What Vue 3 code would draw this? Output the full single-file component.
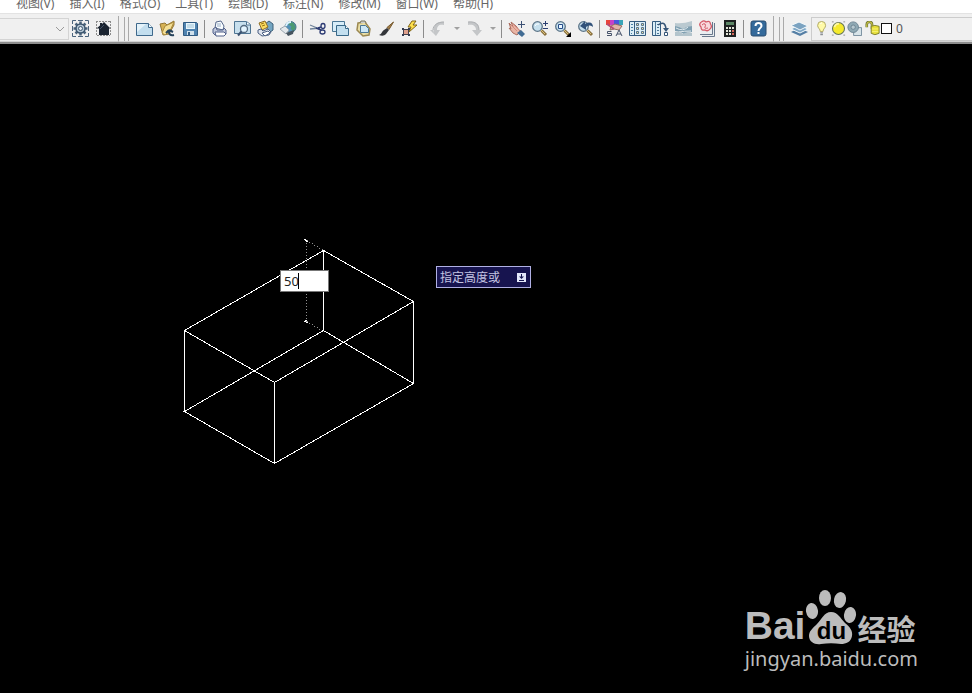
<script setup>
import { ref } from 'vue'

const menus = ['视图(V)', '插入(I)', '格式(O)', '工具(T)', '绘图(D)', '标注(N)', '修改(M)', '窗口(W)', '帮助(H)']
const workspace = ref('')
const height = ref('50')

const glass = '<circle cx="6.500" cy="6.500" r="4.800" fill="#c6e0ee" stroke="#5d7588" stroke-width="1.300"/><path d="M4 6q1-3 4-2" stroke="#fff" fill="none"/><path d="M10.500 10.500l4.500 4.500" stroke="#8a713f" stroke-width="3"/><path d="M10 10l4 4" stroke="#dcc37c"/>'

const icons = {
  gear: '<path d="M.5 4V.5H4M13 .5h3.500V4M16.500 13v3.500H13M4 16.500H.5V13M6 .5h5M6 16.500h5M.5 6v5M16.500 6v5" fill="none" stroke="#4b647c"/><path d="M8.500 1.500v14M1.500 8.500h14M3.500 3.500l10 10M13.500 3.500l-10 10" stroke="#4b647c" stroke-width="2.500"/><circle cx="8.500" cy="8.500" r="4.500" fill="#b6c8d6" stroke="#3d566e" stroke-width="1.500"/><circle cx="8.500" cy="8.500" r="2" fill="#e6eef3" stroke="#3d566e"/>',
  home: '<path d="M1 1.500h15M1.500 1v15M15.500 1v15M2 15.500h13" stroke="#8b8b8b" stroke-dasharray="2 1"/><path d="M1.500 8.500L5 5.500V3h2v1l2-2 6.500 6.500H14V15H4V8.500z" fill="#1b2431"/><path d="M5 9l4-4" stroke="#435267"/>',
  fresh: '<path d="M.5 3.500h12l4 4v8H.5z" fill="#c3deee" stroke="#3f698c"/><path d="M12.500 3.500v4h4" fill="#f4fafc" stroke="#3f698c"/><path d="M1 4h9L1 12z" fill="#e5f3fa"/>',
  open: '<path d="M1 4l5-1 2 2 7-4v4l-5 9-6 1z" fill="#d6b154" stroke="#937635"/><path d="M3 13l3-7 9-4-4 9-5 4z" fill="#f5df94" stroke="#a98b3e"/><path d="M15 15c-4 1-5-1-5-4m0-1l-3 3m3-3l4 2" fill="none" stroke="#24425b" stroke-width="2"/>',
  save: '<path d="M1.500 2.500h13l1 1v12h-14z" fill="#4f83b0" stroke="#315b82"/><path d="M4 3h9v6H4z" fill="#e8f5fb"/><path d="M5 5h7M5 7h7" stroke="#a0c4d8"/><path d="M5 11h7v4H5z" fill="#d0e1ec"/><path d="M6 12h2v3H6z" fill="#315b82"/>',
  print: '<path d="M4 8l1-6 5-1 3 5-1 4z" fill="#f8fcff" stroke="#56688a"/><path d="M2 9l3-2 1 3h6l1-2 2 2v4l-3 1H4l-2-2z" fill="#c1c9dc" stroke="#51618a"/><path d="M4 12h9l2 2-2 2H5z" fill="#fff" stroke="#51618a"/><path d="M6 4h4M6 6h4" stroke="#99aec5"/>',
  preview: '<path d="M.5 1.500h12l4 3v9H.5z" fill="#c7dfed" stroke="#4f7593"/><path d="M12.500 2v3h4" fill="#fff" stroke="#4f7593"/><circle cx="10" cy="9" r="3.500" fill="#e4f5ff" stroke="#536a80" stroke-width="1.300"/><path d="M7.500 11.500L4 15.500" stroke="#3a5170" stroke-width="2"/>',
  publish: '<path d="M8 4l4-3 4 3v6l-4 3z" fill="#74a5c1" stroke="#3f6079"/><path d="M2 3l6-2 3 6-6 3z" fill="#fbdc60" stroke="#8c6b25"/><path d="M4 4l3-1M5 6l3-1" stroke="#9b7314"/><path d="M1 10l3-1 2 2 5-2 3 3-2 3-7 1-4-3z" fill="#dfe4ed" stroke="#4a5f82"/><path d="M5 13l6-2 2 2-5 3z" fill="#fff" stroke="#4a5f82"/>',
  globe: '<circle cx="10.500" cy="7" r="5.500" fill="#5390b6" stroke="#4a7287"/><path d="M10 1.500l4 2 1.500 4-2 4-3-3 1-2-3-2z" fill="#4c9a72"/><path d="M6 6q1-4 5-4" stroke="#e0f4ff" stroke-width="2" fill="none"/><path d="M0 9l5-3 4 4-3 4z" fill="#e3e8ec" stroke="#9aa6b0"/><path d="M6 13l8-3-1 4-5 2z" fill="#46545f"/>',
  cut: '<path d="M1 5l12 5M1 9l10-1" stroke="#71849a" stroke-width="1.300"/><ellipse cx="14" cy="6" rx="2" ry="2.500" fill="none" stroke="#2c3a73" stroke-width="1.300"/><ellipse cx="13.500" cy="12" rx="2.500" ry="2" fill="none" stroke="#2c3a73" stroke-width="1.300"/><path d="M7 8l5 2M9 8l3-1" stroke="#2c3a73" stroke-width="1.500"/>',
  copy: '<path d="M.5 1.500h12v10H.5z" fill="#d8edf8" stroke="#4b7795"/><path d="M4.500 5.500h9l3 3v7h-12z" fill="#c3dfef" stroke="#386888"/><path d="M13.500 5.500v3h3" fill="#fff" stroke="#386888"/>',
  paste: '<path d="M3 3l7-1 5 7-1 6-6 1-6-6z" fill="#e9dea6" stroke="#9b8851" stroke-width="1.500"/><path d="M5 3l1-2h4l1 2" fill="#ccc" stroke="#77745a"/><path d="M5.500 5.500h5l3 3v4h-8z" fill="#cce7f6" stroke="#4b7795"/>',
  brush: '<path d="M15.500 2L9 7.500l2 2z" fill="#a37e49" stroke="#76582c"/><path d="M9 8l2 2-3 4c-2 2-4 2-7 1 3-1 3-4 5-5z" fill="#33353a"/>',
  match: '<path d="M11 1L7 7h3L8 12l8-7h-4l3-4z" fill="#ffe04a" stroke="#806519"/><path d="M2.500 9.500h5v5h-5z" fill="#dfa08c" stroke="#45404c"/><path d="M1 8h2v2H1zM7 8h2v2H7zM1 14h2v2H1zM7 14h2v2H7z" fill="#353c51"/>',
  undo: '<path d="M4 15C2 5 7 1 14 2v3C9 4 7 6 7 10h3l-4 6-6-6h3" fill="#c4c6c8"/><path d="M3 10C3 5 8 2 14 2" fill="none" stroke="#aeb0b3"/>',
  redo: '<path d="M2 2c7-1 12 2 11 8h3l-5 6-5-6h4c0-4-3-6-8-5z" fill="#c4c6c8"/><path d="M2 2c8-1 11 3 11 8" fill="none" stroke="#aeb0b3"/>',
  pan: '<path d="M1 3l4 4-2-5 5 4 3 4 2 1-4 4-4-2-4-5 2 1z" fill="#e9b5a5" stroke="#ab6e60"/><path d="M9 13l4-3 4 4-3 3z" fill="#416c94"/><path d="M13.500 1v7M10 4.500h7" stroke="#3b5074"/><path d="M3 5l6 6M5 4l6 6" stroke="#d58a80"/>',
  zoom: glass + '<path d="M12 3.500h5M14.500 1v5M12 8.500h5" stroke="#2c4071"/>',
  windowed: glass + '<path d="M4.500 4.500h4v4h-4z" fill="#eef9ff" stroke="#254c89"/><path d="M17 12v5h-5z" fill="#000"/>',
  previous: glass + '<path d="M3 6l5-5v3c5-3 8-1 8 3-2-2-4-2-7 0v3z" fill="#31527a"/>',
  properties: '<path d="M0 0h5v5H0z" fill="#e9443c"/><path d="M4 0h4v5H4z" fill="#c741c8"/><path d="M8 0h5v5H8z" fill="#4b56dc"/><path d="M13 0h4v5h-4z" fill="#39a5b8"/><path d="M5 6l4-2 7 2-3 4-5-1-4 1z" fill="#e2b5a8" stroke="#936b61"/><path d="M1 4l7 5" stroke="#b34d75" stroke-width="2"/><path d="M5.500 11.500h-4v2h4v2H1M10 16l3-6 3 6m-5-2h4" stroke="#46536a" fill="none"/>',
  design: '<path d="M.5 1.500h16v14H.5z" fill="#dceef7" stroke="#355c80"/><path d="M5.500 2v13" stroke="#355c80"/><path d="M2 4.500h2M2 7.500h2M2 10.500h2M2 13.500h1" stroke="#4880a4"/><path d="M7.500 3.500h2v2h-2zM12.500 3.500h2v2h-2zM7.500 7.500h2v2h-2zM12.500 7.500h2v2h-2zM7.500 11.500h2v2h-2zM12.500 11.500h2v2h-2z" fill="#f2df9b" stroke="#56748e"/>',
  palettes: '<path d="M.5 1.500h8v14h-8z" fill="#dceef7" stroke="#355c80"/><path d="M3.500 2v13M5 4.500h2M5 7.500h2M5 10.500h2M5 13.500h2" stroke="#4e7798"/><path d="M6 5q7-5 8 4" fill="none" stroke="#365577" stroke-width="1.500"/><path d="M11 8h6l-3 4z" fill="#365577"/><path d="M12.500 12.500h3v3h-3z" fill="#fff" stroke="#365577"/>',
  sheets: '<path d="M0 3q8 1 17-2v5l-9 3-8-2z" fill="#bac9d0"/><path d="M0 6q5 1 8 3 4-3 9-3v6q-5 0-8 2-4-3-9-3z" fill="#7f9fb1"/><path d="M1 8q7 4 12-1M4 12q5-1 12-1" stroke="#e2ebef" fill="none"/><path d="M0 12q5-1 8 2 4-3 9-1v3H0z" fill="#b3c4cc"/>',
  markup: '<path d="M3 3h14v14H3z" fill="#e9edf0"/><path d="M4 16.500h12.500V3M2 14.500h12.500V2" fill="none" stroke="#68788c"/><path d="M4 1.500q2-1.500 4 .5 4-2 4.500 2 2 3-.5 5-2 3-5 1-4 1-4-3-3-3 1-5.500z" fill="#f8d9dc" stroke="#d35a67" stroke-width="1.300"/><path d="M4 5q2-2 3-1t0 3 3 1" fill="none" stroke="#d35a67"/>',
  calculator: '<path d="M3 0h12v17H3z" fill="#1d2020"/><path d="M5 2h8v3H5z" fill="#5c8766"/><path d="M5 7h2v2H5zM8 7h2v2H8zM11 7h2v2h-2zM5 10h2v2H5zM8 10h2v2H8zM5 13h2v2H5zM8 13h2v2H8z" fill="#e3e5d9"/><path d="M11 10h2v2h-2zM11 13h2v2h-2z" fill="#d36558"/>',
  help: '<rect x="1" y="1" width="15" height="15" rx="2" fill="#346a9b" stroke="#294d70"/><path d="M5.500 6c0-4 6-4 6 0 0 2-3 2-3 5" fill="none" stroke="#fff" stroke-width="2"/><path d="M7.500 12h2v2h-2z" fill="#fff"/>',
  layers: '<path d="M0 12l8-4 9 4-8 4z" fill="#557fa5"/><path d="M0 9l8-4 9 4-8 4z" fill="#7fa8c7" stroke="#f4f9fb"/><path d="M0 5.500L8 2l9 4-8 4z" fill="#7ba3c1" stroke="#f4f9fb"/>',
  bulb: '<path d="M6 12c0-3-3-4-3-7a4.500 4.500 0 019 0c0 3-3 4-3 7z" fill="#fffaa8" stroke="#a9a05a"/><path d="M6 13.500h3M6 15.500h3" stroke="#666c73"/><path d="M6 3l2-1" stroke="#fff"/>',
  sun: '<path d="M1 1h2M14 1h2M1 16h2M14 16h2" stroke="#888"/><circle cx="8.500" cy="8.500" r="6.800" fill="#f5ea2c" stroke="#63745a" stroke-width="1.200"/><path d="M4 7q1-4 5-4" stroke="#fff8a2" stroke-width="2" fill="none"/>',
  viewport: '<path d="M10.500 7.500h6v9h-9v-4" fill="#d8e4e9" stroke="#6c8496"/><circle cx="7" cy="7" r="6" fill="#8fa9b4" stroke="#68808e"/><circle cx="7" cy="7" r="2.500" fill="#b7c8cf" stroke="#68808e"/>',
  lock: '<path d="M2 7V4q0-3 3-3t3 3v5" fill="none" stroke="#737a38" stroke-width="3"/><path d="M2 7V4q0-3 3-3t3 3v5" fill="none" stroke="#e4da48"/><path d="M7 6q4-2 9 0v8q-5 3-9 0z" fill="#e7df3b" stroke="#75772d"/><path d="M8 9h7M8 12h7" stroke="#f8f47c"/>'
}

const groups = [
  [['fresh', '新建'], ['open', '打开'], ['save', '保存']],
  [['print', '打印'], ['preview', '打印预览'], ['publish', '发布'], ['globe', '三维 DWF']],
  [['cut', '剪切'], ['copy', '复制'], ['paste', '粘贴'], ['brush', '特性匹配'], ['match', '块编辑器']],
  [['undo', '放弃', true], ['redo', '重做', true]],
  [['pan', '实时平移'], ['zoom', '实时缩放'], ['windowed', '窗口缩放'], ['previous', '缩放上一个']],
  [['properties', '特性'], ['design', '设计中心'], ['palettes', '工具选项板'], ['sheets', '图纸集管理器'], ['markup', '标记集管理器'], ['calculator', '快速计算器']],
  [['help', '帮助']]
]
const layerStates = ['bulb', 'sun', 'viewport', 'lock']
</script>

<template>
  <div class="app">
    <nav class="menubar">
      <button v-for="menu in menus" :key="menu" class="menu">{{ menu }}</button>
    </nav>

    <header class="toolbars">
      <section class="bar workspace-bar">
        <select v-model="workspace" class="workspace" aria-label="工作空间"><option value=""></option></select>
        <svg class="chevron" viewBox="0 0 10 6"><path d="M1 1l4 4 4-4" /></svg>
        <button class="tool" aria-label="工作空间设置"><svg class="icon" viewBox="0 0 17 17" v-html="icons.gear" /></button>
        <button class="tool" aria-label="我的工作空间"><svg class="icon" viewBox="0 0 17 17" v-html="icons.home" /></button>
      </section>
      <section class="bar standard-bar">
        <span class="grip" />
        <div v-for="(group, i) in groups" :key="i" class="group">
          <template v-for="[name, label, drop] in group" :key="name">
            <button class="tool" :aria-label="label"><svg class="icon" viewBox="0 0 17 17" v-html="icons[name]" /></button>
            <button v-if="drop" class="drop" :aria-label="label + '列表'"><i class="triangle" /></button>
          </template>
        </div>
      </section>
      <section class="bar layer-bar">
        <span class="grip" />
        <button class="tool" aria-label="图层特性管理器"><svg class="icon" viewBox="0 0 17 17" v-html="icons.layers" /></button>
        <button class="layer-list" aria-label="图层 0">
          <svg v-for="name in layerStates" :key="name" class="state" viewBox="0 0 17 17" v-html="icons[name]" />
          <i class="swatch" />
          <span class="layer-name">0</span>
        </button>
      </section>
    </header>

    <main class="canvas">
      <svg class="drawing" viewBox="180 235 240 235" shape-rendering="crispEdges">
        <path class="guide" d="M306.500 240V321M306.500 240.500L323 250M306.500 321.500L323 331" />
        <path class="edge" d="M323.500 250.500L413.500 301.500L274.500 382.500L184.500 330.500ZM323.500 330.500L413.500 383.500L274.500 463.500L184.500 411.500ZM323.500 250V331M413.500 301V384M274.500 382V463M184.500 330V412" />
        <path class="tick" d="M304 239.500h2M305 240.500h2M306 241.500h2M305 320.500h2M304 321.500h2M306 322.500h2" />
      </svg>

      <label class="height-field">
        <input v-model="height" class="height-input" aria-label="高度">
        <span class="caret" />
      </label>

      <div class="prompt">
        <span>指定高度或</span>
        <svg class="prompt-icon" viewBox="0 0 9 9"><path d="M0 0h9v9H0z" fill="#e4e8fa" /><path d="M4.500 1v4M2 7.500h5" stroke="#15154e" /><path d="M2 3.500h5L4.500 6z" fill="#15154e" /></svg>
      </div>

      <footer class="watermark">
        <div class="brand">
          <span class="bai">Bai</span>
          <span class="paw">
            <svg class="paw-shape" viewBox="0 0 52 56">
              <ellipse cx="7" cy="22" rx="6" ry="8" transform="rotate(-8 7 22)" />
              <ellipse cx="20" cy="9" rx="6" ry="8" />
              <ellipse cx="35" cy="11" rx="6" ry="8" transform="rotate(12 35 11)" />
              <ellipse cx="45" cy="26" rx="6" ry="8" transform="rotate(8 45 26)" />
              <path d="M26 23c7 0 9 6 14 11 5 4 8 8 7 13-1 6-6 8-11 8-7-1-13-1-20 0-6 1-12-2-12-8 0-5 4-8 8-12 5-5 7-12 14-12z" />
            </svg>
            <span class="du">du</span>
          </span>
          <span class="jingyan">经验</span>
        </div>
        <div class="site">jingyan.baidu.com</div>
      </footer>
    </main>
  </div>
</template>

<style>
html, body { margin: 0; background: #000; }
</style>

<style scoped>
* { box-sizing: border-box; }
button, input, select { margin: 0; padding: 0; border: 0; border-radius: 0; background: transparent; font: inherit; color: inherit; appearance: none; }
.app { display: flex; flex-direction: column; min-height: 100vh; font-family: "Noto Sans", "Noto Sans CJK SC", sans-serif; font-size: 12px; }
.menubar { display: flex; align-items: flex-end; gap: 15px; height: 13px; padding: 0 16px 1px; overflow: hidden; background: #fff; color: #666; }
.menu { flex: none; line-height: 16px; white-space: nowrap; }
.toolbars { display: flex; height: 31px; padding-top: 2px; background: #f0f0f0; border-top: 1px solid #e3e3e3; border-bottom: 2px solid #8e8e8e; overflow: hidden; }
.bar { display: flex; align-items: center; flex: none; border-right: 1px solid #aaa; border-bottom: 1px solid #d4d4d4; }
.workspace-bar { position: relative; width: 119px; }
.workspace { width: 69px; height: 22px; background: #f0f0f0; border: 1px solid #d4d4d4; border-left: 0; }
.chevron { position: absolute; left: 55px; width: 10px; height: 6px; fill: none; stroke: #999; pointer-events: none; }
.grip { width: 5px; height: 24px; margin: 0 4px 0 5px; border: solid #aaa; border-width: 0 1px; }
.tool { display: grid; place-items: center; flex: none; width: 23px; height: 24px; }
.icon { width: 17px; height: 17px; }
.group { display: flex; align-items: center; }
.group + .group::before { content: ""; width: 1px; height: 18px; margin: 0 3px 0 2px; background: #8c8c8c; }
.drop { display: grid; place-items: center; width: 13px; height: 24px; }
.triangle { border: solid transparent; border-width: 3px 3px 0; border-top-color: #a0a0a0; }
.standard-bar { padding-right: 3px; }
.layer-bar { flex: 1; border-right: 0; }
.layer-list { display: flex; align-items: center; flex: 1; height: 24px; padding-left: 3px; border: solid #ccc; border-width: 1px 0 1px 1px; color: #555; }
.state { flex: none; width: 15px; height: 15px; margin-right: 1px; }
.state:nth-child(4) { margin-left: 2px; }
.swatch { width: 11px; height: 11px; background: #fff; border: 1px solid #111; }
.layer-name { margin-left: 4px; }
.canvas { position: relative; flex: 1; overflow: hidden; background: #000; }
.drawing { position: absolute; left: 180px; top: 191px; width: 240px; height: 235px; fill: none; }
.edge, .tick { stroke: #fff; }
.guide { stroke: #909090; stroke-dasharray: 1 2; }
.height-field { position: absolute; left: 280px; top: 226px; display: flex; align-items: center; width: 49px; height: 22px; padding-left: 3px; background: #fff; border: 1px solid #777; color: #222; }
.height-input { width: 40px; height: 20px; font-size: 13px; outline: 0; }
.caret { position: absolute; left: 17px; top: 2px; width: 1px; height: 16px; background: #000; }
.prompt { position: absolute; left: 436px; top: 222px; display: flex; align-items: center; justify-content: space-between; width: 95px; height: 22px; padding: 0 4px 0 3px; background: #17144f; border: 1px solid #b0b0e4; color: #c4c4e2; white-space: nowrap; }
.prompt-icon { width: 9px; height: 9px; }
.watermark { position: absolute; right: 54px; bottom: 20px; color: #bcbcbc; }
.brand { display: flex; align-items: flex-end; height: 56px; }
.bai { font: bold 39px/38px "Liberation Sans", sans-serif; }
.paw { position: relative; width: 52px; height: 56px; }
.paw-shape { display: block; width: 52px; height: 56px; fill: #bcbcbc; }
.du { position: absolute; left: 0; right: 0; bottom: 2px; text-align: center; color: #000; font: bold 24px/24px "Liberation Sans", sans-serif; }
.jingyan { font: bold 29px/34px "Noto Sans CJK SC", sans-serif; }
.site { font-size: 20px; line-height: 28px; }
</style>
